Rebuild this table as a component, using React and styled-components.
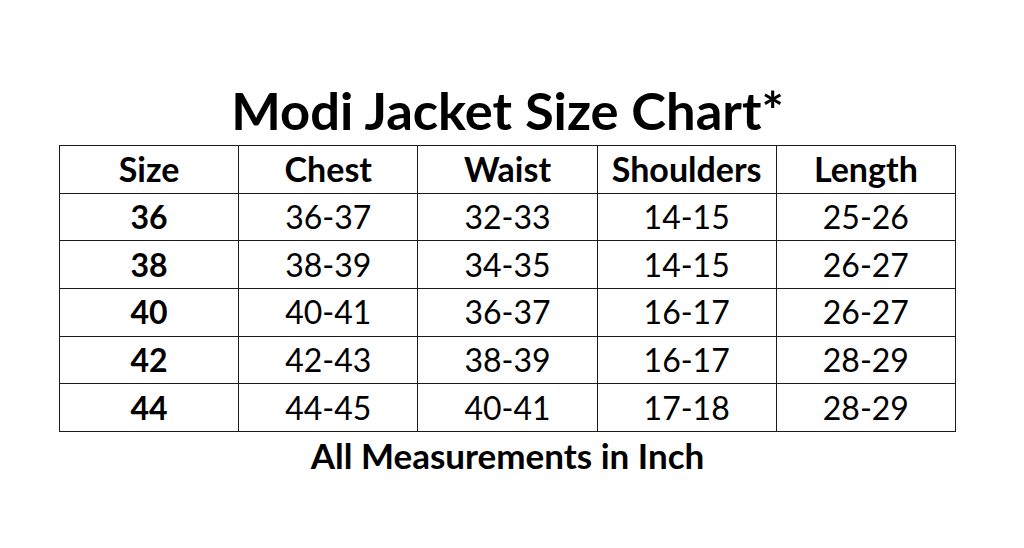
import React from "react";
import styled, { createGlobalStyle } from "styled-components";

const Global = createGlobalStyle`
  html, body { margin: 0; padding: 0; background: #fff; }
  body { font-family: Lato, "Open Sans", sans-serif; color: #000; }
`;

const Page = styled.div`
  width: 1024px;
  height: 548px;
  display: flex;
  flex-direction: column;
  align-items: center;
  padding: 78px 9px 0 0;
  box-sizing: border-box;
`;

const Title = styled.h1`
  margin: 0;
  font-size: 52.5px;
  font-weight: 700;
  line-height: 64px;
`;

const Table = styled.table`
  border-collapse: collapse;
  width: 897px;
  margin-top: 3px;
  table-layout: fixed;
`;

const Cell = styled.td`
  border: 1.5px solid #1a1a1a;
  height: 46.7px;
  padding: 0;
  text-align: center;
  vertical-align: middle;
  font-size: ${(p) => (p.$head ? "34px" : "32px")};
  line-height: 1;
  font-weight: ${(p) => (p.$bold ? 700 : 400)};
`;

const Footer = styled.div`
  margin-top: 3px;
  font-size: 35px;
  font-weight: 700;
  line-height: 40px;
`;

const headers = ["Size", "Chest", "Waist", "Shoulders", "Length"];
const rows = [
  ["36", "36-37", "32-33", "14-15", "25-26"],
  ["38", "38-39", "34-35", "14-15", "26-27"],
  ["40", "40-41", "36-37", "16-17", "26-27"],
  ["42", "42-43", "38-39", "16-17", "28-29"],
  ["44", "44-45", "40-41", "17-18", "28-29"],
];

export default function App() {
  return (
    <>
      <Global />
      <Page>
        <Title>Modi Jacket Size Chart*</Title>
        <Table>
          <tbody>
            <tr>
              {headers.map((h) => (
                <Cell key={h} $bold $head>
                  {h}
                </Cell>
              ))}
            </tr>
            {rows.map((r) => (
              <tr key={r[0]}>
                {r.map((v, i) => (
                  <Cell key={i} $bold={i === 0}>
                    {v}
                  </Cell>
                ))}
              </tr>
            ))}
          </tbody>
        </Table>
        <Footer>All Measurements in Inch</Footer>
      </Page>
    </>
  );
}
